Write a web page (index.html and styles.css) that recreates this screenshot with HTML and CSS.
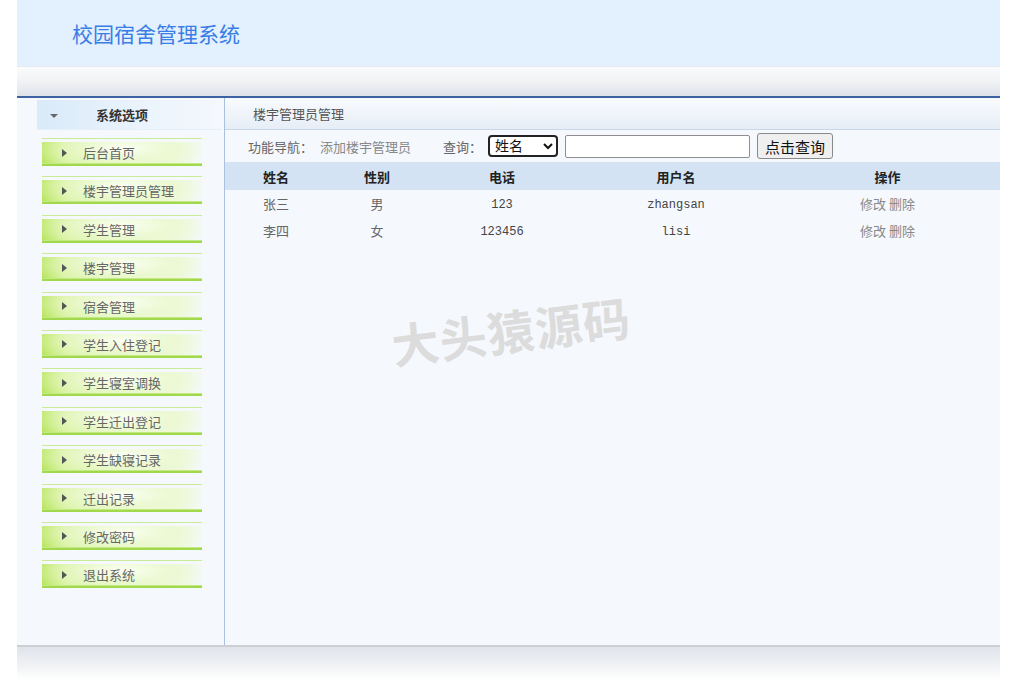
FILE: index.html
```html
<!DOCTYPE html>
<html lang="zh-CN">
<head>
<meta charset="utf-8">
<title>校园宿舍管理系统</title>
<link rel="stylesheet" href="styles.css">
</head>
<body>
<div class="page">
  <header class="header">
    <h1 class="title">校园宿舍管理系统</h1>
  </header>
  <div class="topbar"></div>
  <div class="body">
    <aside class="sidebar">
      <div class="side-head"><span class="down"></span><span class="side-title">系统选项</span></div>
      <ul class="menu">
        <li class="item"><div class="item-body"><span class="arrow"></span>后台首页</div></li>
        <li class="item"><div class="item-body"><span class="arrow"></span>楼宇管理员管理</div></li>
        <li class="item"><div class="item-body"><span class="arrow"></span>学生管理</div></li>
        <li class="item"><div class="item-body"><span class="arrow"></span>楼宇管理</div></li>
        <li class="item"><div class="item-body"><span class="arrow"></span>宿舍管理</div></li>
        <li class="item"><div class="item-body"><span class="arrow"></span>学生入住登记</div></li>
        <li class="item"><div class="item-body"><span class="arrow"></span>学生寝室调换</div></li>
        <li class="item"><div class="item-body"><span class="arrow"></span>学生迁出登记</div></li>
        <li class="item"><div class="item-body"><span class="arrow"></span>学生缺寝记录</div></li>
        <li class="item"><div class="item-body"><span class="arrow"></span>迁出记录</div></li>
        <li class="item"><div class="item-body"><span class="arrow"></span>修改密码</div></li>
        <li class="item"><div class="item-body"><span class="arrow"></span>退出系统</div></li>
      </ul>
    </aside>
    <main class="main">
      <div class="crumb">楼宇管理员管理</div>
      <div class="toolbar">
        <span class="label nav">功能导航：</span>
        <a class="link">添加楼宇管理员</a>
        <span class="label query">查询：</span>
        <select class="select"><option>姓名</option></select>
        <input class="input" type="text">
        <button class="btn">点击查询</button>
      </div>
      <table class="grid">
        <colgroup><col class="c1"><col class="c2"><col class="c3"><col class="c4"><col class="c5"></colgroup>
        <thead>
          <tr><th>姓名</th><th>性别</th><th>电话</th><th>用户名</th><th>操作</th></tr>
        </thead>
        <tbody>
          <tr><td>张三</td><td>男</td><td class="mono">123</td><td class="mono">zhangsan</td><td class="ops">修改 删除</td></tr>
          <tr><td>李四</td><td>女</td><td class="mono">123456</td><td class="mono">lisi</td><td class="ops">修改 删除</td></tr>
        </tbody>
      </table>
      <div class="watermark">大头猿源码</div>
    </main>
  </div>
  <footer class="footer"></footer>
</div>
</body>
</html>
```
FILE: styles.css
```css
html, body {
  margin: 0;
  padding: 0;
  background: #ffffff;
  font-family: "Noto Sans CJK SC", "Noto Sans", sans-serif;
}
.page {
  width: 983px;
  margin-left: 17px;
}
.header {
  height: 66px;
  background: #e3f0fd;
  display: flex;
  align-items: center;
}
.title {
  margin: 0 0 0 55px;
  font-size: 21px;
  font-weight: normal;
  color: #3a7de6;
}
.topbar {
  height: 29px;
  border-top: 1px solid #e6ebf1;
  border-bottom: 2px solid #3d62a2;
  background: linear-gradient(to bottom, #fafbfc 0%, #f2f3f5 45%, #dfe3ea 100%);
}
.body {
  display: flex;
  height: 547px;
  background: #f5f8fd;
}
.sidebar {
  width: 208px;
  border-right: 1px solid #a9c1dd;
  box-sizing: border-box;
}
.side-head {
  margin: 2px 0 0 20px;
  width: 185px;
  height: 30px;
  display: flex;
  align-items: center;
  background: linear-gradient(to right, #d9eaf9 0%, #eaf3fc 55%, #f5f8fd 100%);
  border-bottom: 1px solid #e6eef8;
  box-sizing: border-box;
}
.down {
  width: 0;
  height: 0;
  border-left: 4px solid transparent;
  border-right: 4px solid transparent;
  border-top: 4px solid #666;
  margin: 3px 0 0 13px;
}
.side-title {
  margin-left: 38px;
  font-size: 13px;
  font-weight: bold;
  color: #333;
}
.menu {
  list-style: none;
  margin: 4px 0 0 0;
  padding: 0;
}
.item {
  height: 38.4px;
  margin-left: 25px;
  width: 160px;
  box-sizing: border-box;
  padding-top: 4px;
}
.item-body {
  border-top: 1px solid #c9eb95;
  padding-top: 3px;
  height: 21px;
  display: flex;
  align-items: center;
  font-size: 13px;
  color: #666;
  background:
    radial-gradient(ellipse 60% 95% at 50% 40%, rgba(252,255,245,0.95) 0%, rgba(236,249,210,0.7) 50%, rgba(210,240,140,0) 100%),
    linear-gradient(to right, #b9e55f 0%, #d6f29c 15%, #e8f8c8 55%, #eef8da 85%, #f5f8fd 100%);
  background-clip: content-box, content-box;
  box-shadow: 0 2px 0 #a2d94c;
  border-bottom: 1px solid #c3e985;
}
.arrow {
  width: 0;
  height: 0;
  border-top: 4px solid transparent;
  border-bottom: 4px solid transparent;
  border-left: 5px solid #555;
  margin: 0 16px 0 20px;
}
.main {
  flex: 1;
  position: relative;
  overflow: hidden;
}
.crumb {
  height: 32px;
  box-sizing: border-box;
  padding-left: 28px;
  display: flex;
  align-items: center;
  font-size: 13px;
  color: #555;
  background: linear-gradient(to bottom, #f8fbfe 0%, #eef3f9 60%, #e6edf6 100%);
  border-bottom: 1px solid #c9d8e8;
}
.toolbar {
  height: 32px;
  display: flex;
  align-items: center;
  padding-left: 23px;
  font-size: 13px;
}
.label {
  color: #666;
}
.nav {
  width: 72px;
}
.link {
  color: #888;
  width: 123px;
}
.query {
  width: 45px;
}
.select {
  width: 70px;
  height: 22px;
  border: 2px solid #222;
  border-radius: 4px;
  background: #fff;
  font-family: "Liberation Sans", "Noto Sans CJK SC", sans-serif;
  font-size: 14px;
  padding: 0 1px;
  box-sizing: border-box;
  color: #111;
}
.input {
  margin-left: 7px;
  width: 185px;
  height: 23px;
  box-sizing: border-box;
  border: 1px solid #8f8f8f;
  border-radius: 2px;
  background: #fff;
}
.btn {
  margin-left: 7px;
  width: 76px;
  height: 26px;
  box-sizing: border-box;
  border: 1px solid #8a8a8a;
  border-radius: 3px;
  background: #efefef;
  font-family: "Noto Sans CJK SC", sans-serif;
  font-size: 15px;
  color: #111;
  padding: 0;
}
.grid {
  width: 775px;
  border-collapse: collapse;
  table-layout: fixed;
  font-size: 13px;
}
.c1 { width: 102px; }
.c2 { width: 100px; }
.c3 { width: 150px; }
.c4 { width: 198px; }
.c5 { width: 225px; }
.grid th {
  height: 28px;
  padding: 0;
  background: #d3e3f3;
  color: #222;
  font-weight: bold;
  text-align: center;
}
.grid td {
  height: 27px;
  padding: 0;
  text-align: center;
  color: #666;
}
.grid .mono {
  font-family: "Liberation Mono", monospace;
  font-size: 12px;
  color: #444;
  padding-top: 2px;
  height: 25px;
}
.grid .ops {
  color: #888;
}
.watermark {
  position: absolute;
  left: 158px;
  top: 207px;
  width: 256px;
  line-height: 50px;
  font-size: 47px;
  font-weight: bold;
  color: #dcdcdc;
  text-align: center;
  transform: rotate(-7deg);
  letter-spacing: 1px;
  white-space: nowrap;
}
.footer {
  height: 33px;
  border-top: 2px solid #cdcfd2;
  background: linear-gradient(to bottom, #e0e4eb 0%, #eef0f3 50%, #ffffff 100%);
}
```
